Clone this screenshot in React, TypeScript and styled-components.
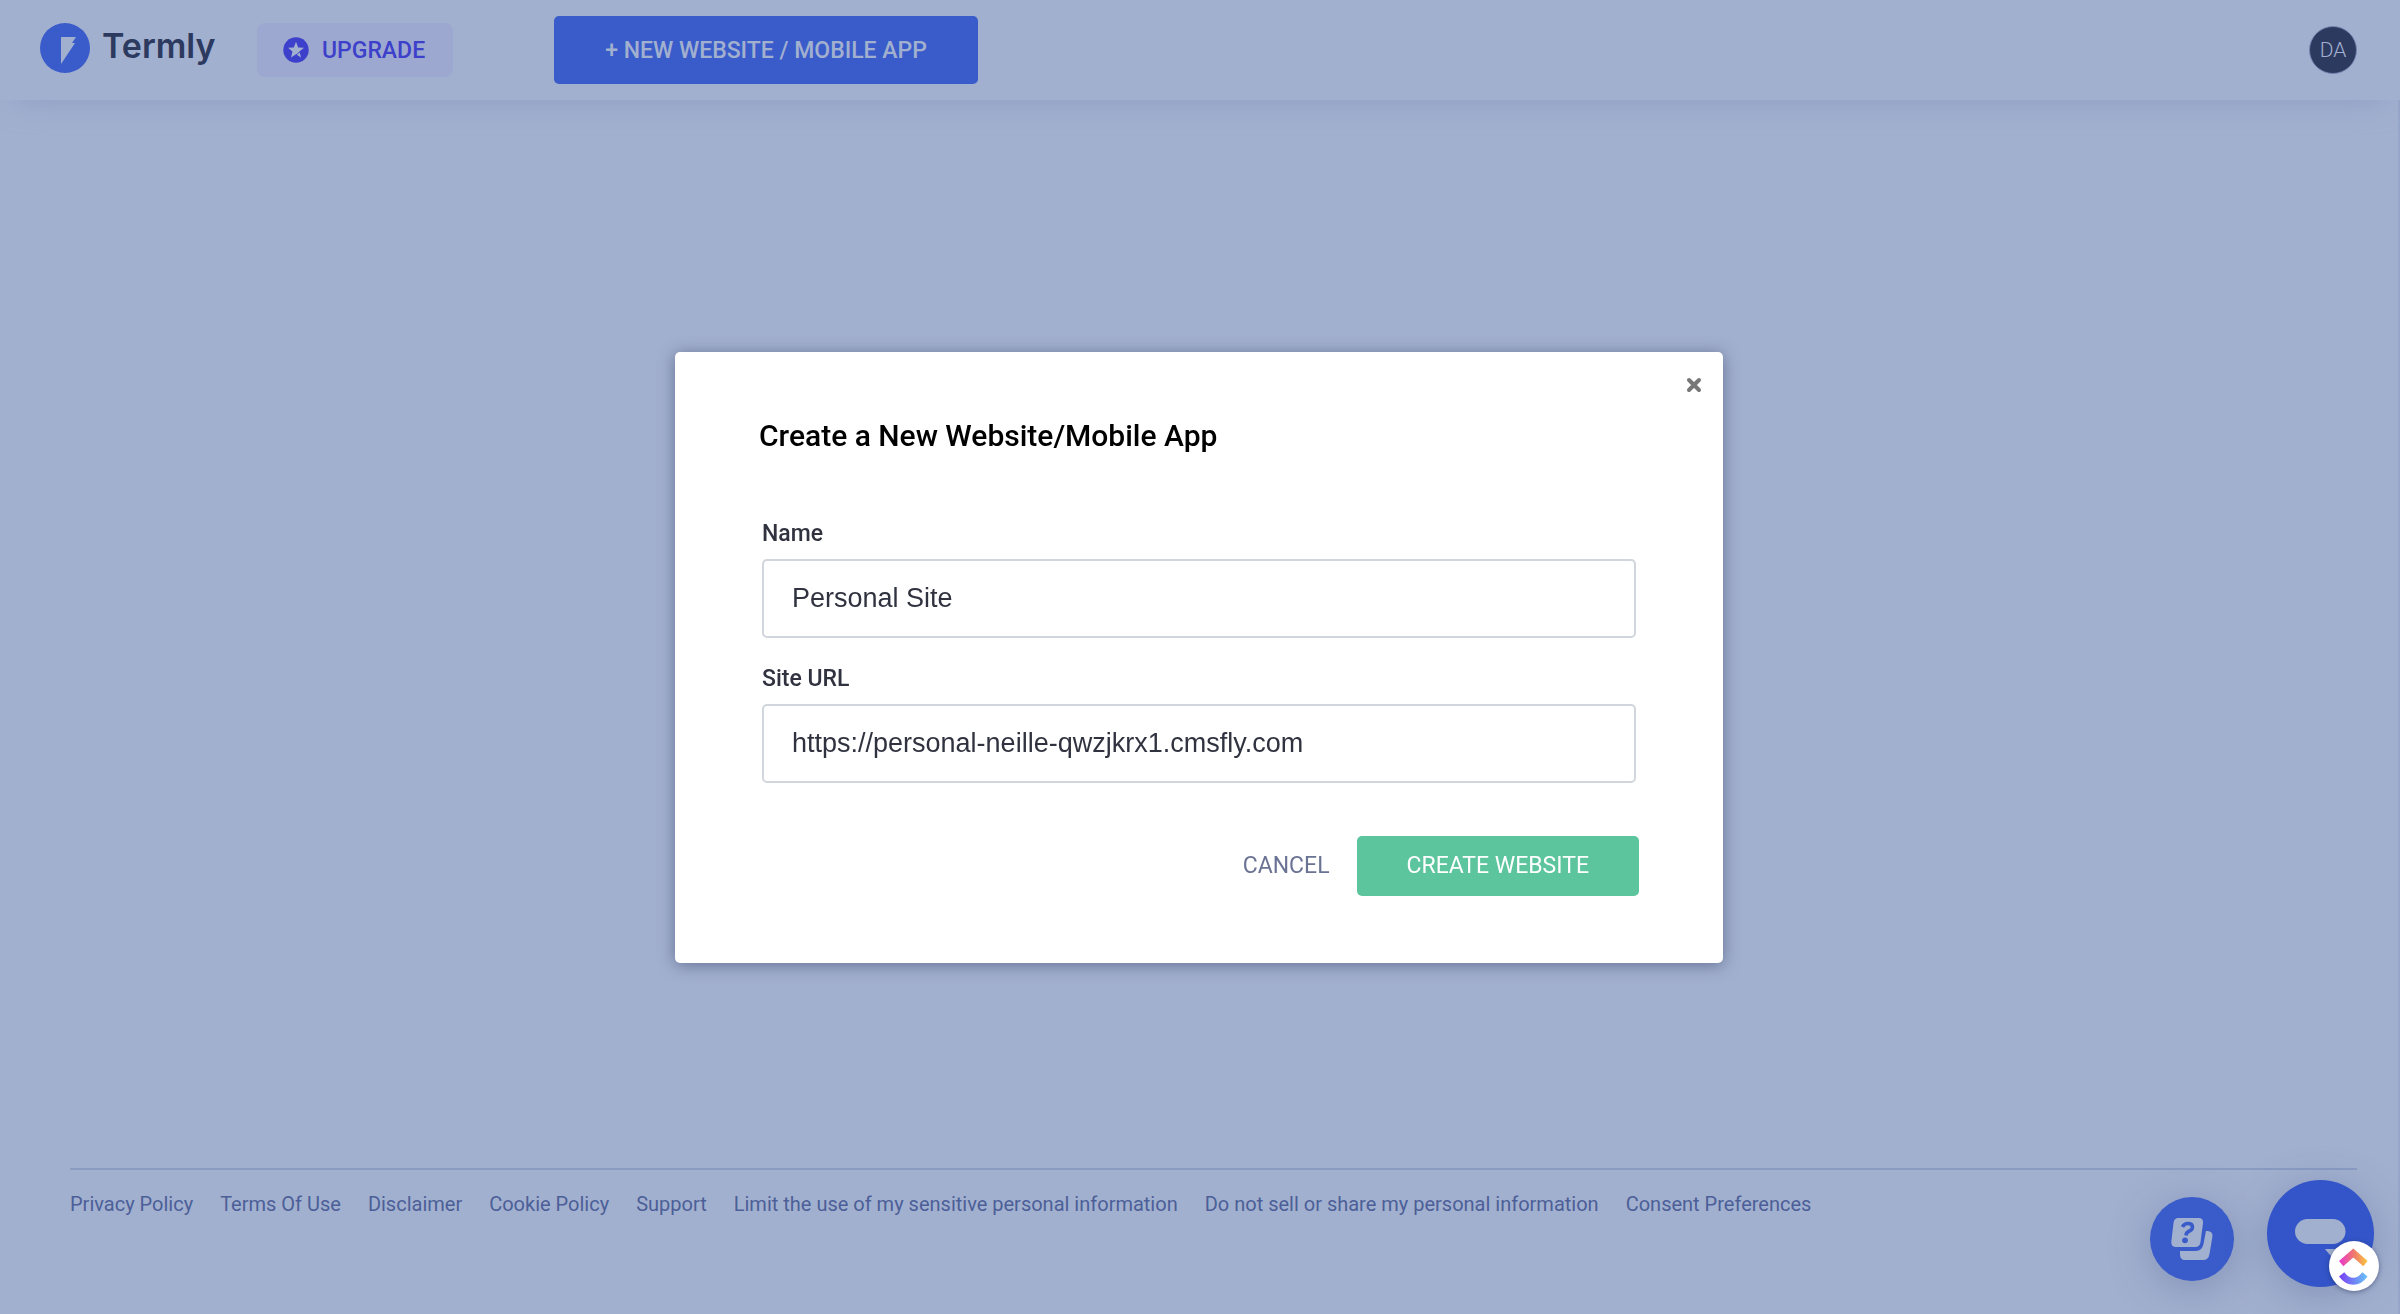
import React, { useState } from "react";
import styled, { createGlobalStyle } from "styled-components";

const color = {
  canvas: "#a2b0cf",
  edge: "#96a6ca",
  rule: "#8a9bc2",
  navy: "#2d3a60",
  blue: "#3a5cca",
  indigo: "#3d40ca",
  upgrade: "#9da8d0",
  link: "#4c5f98",
  ink: "#30333f",
  field: "#d1d6dc",
  muted: "#6b7394",
  green: "#5cc59d",
};

const GlobalStyle = createGlobalStyle`
  *, *::before, *::after { box-sizing: border-box; }
  body {
    margin: 0;
    background: ${color.canvas};
    font-family: Roboto, "Liberation Sans", sans-serif;
  }
  button, input { font-family: inherit; }
  button { border: 0; cursor: pointer; }
`;

const Page = styled.div`
  display: flex;
  flex-direction: column;
  min-height: 100vh;
`;

const Header = styled.header`
  position: relative;
  display: flex;
  align-items: center;
  height: 100px;
  padding: 0 43px 0 40px;
  background: ${color.canvas};
  box-shadow: 0 14px 32px -14px #8c9cc4;
`;

const Brand = styled.a`
  display: flex;
  align-items: center;
  gap: 12px;
  width: 217px;
  padding-bottom: 4px;
  color: ${color.navy};
  font-family: Inter, "Open Sans", sans-serif;
  font-size: 34px;
  font-weight: 600;
  line-height: 40px;
  text-decoration: none;
`;

const BrandName = styled.span`
  padding-bottom: 4px;
`;

const Upgrade = styled.button`
  display: flex;
  align-items: center;
  gap: 13px;
  height: 54px;
  padding: 0 28px 0 26px;
  border-radius: 8px;
  background: ${color.upgrade};
  color: ${color.indigo};
  font-size: 23px;
  font-weight: 500;
`;

const NewSite = styled.button`
  height: 68px;
  margin-left: 101px;
  padding: 0 51px;
  border-radius: 5px;
  background: ${color.blue};
  color: ${color.canvas};
  font-size: 23px;
  font-weight: 500;
`;

const Avatar = styled.button`
  width: 48px;
  height: 48px;
  margin-left: auto;
  padding: 0;
  border: 1px solid #7485b0;
  border-radius: 50%;
  background: ${color.navy};
  color: ${color.canvas};
  font-size: 21px;
  font-weight: 300;
`;

const Body = styled.div`
  display: flex;
  flex: 1;
  flex-direction: column;
  justify-content: flex-end;
  border-right: 2px solid ${color.edge};
`;

const Footer = styled.footer`
  display: flex;
  flex-wrap: wrap;
  gap: 27px;
  min-height: 146px;
  margin: 0 41px 0 70px;
  padding-top: 22px;
  border-top: 2px solid ${color.rule};
`;

const FooterLink = styled.a`
  color: ${color.link};
  font-size: 20px;
  line-height: 24px;
  text-decoration: none;
`;

const Overlay = styled.div`
  position: fixed;
  inset: 0 2px 0 0;
  display: flex;
  align-items: center;
  justify-content: center;
`;

const Dialog = styled.form`
  position: relative;
  width: 1048px;
  max-width: 96%;
  padding: 64px 84px 67px;
  border-radius: 5px;
  background: #fff;
  box-shadow: 0 2px 16px rgba(40, 50, 90, 0.5);
`;

const Close = styled.button`
  position: absolute;
  top: 20px;
  right: 16px;
  display: flex;
  padding: 5px;
  background: none;
`;

const Title = styled.h1`
  margin: 0;
  color: #000;
  font-size: 30px;
  font-weight: 500;
  line-height: 40px;
`;

const Fields = styled.div`
  display: grid;
  gap: 26px;
  margin: 63px 3px 53px;
`;

const Field = styled.div`
  display: flex;
  flex-direction: column;
  gap: 10px;
`;

const Label = styled.label`
  color: ${color.ink};
  font-size: 23px;
  font-weight: 500;
  line-height: 30px;
`;

const TextBox = styled.input`
  width: 100%;
  height: 79px;
  padding: 0 28px;
  border: 2px solid ${color.field};
  border-radius: 5px;
  outline: none;
  background: #fff;
  color: ${color.ink};
  font-family: "Liberation Sans", Arial, sans-serif;
  font-size: 27px;
`;

const Actions = styled.div`
  display: flex;
  justify-content: flex-end;
  gap: 27px;
`;

const Cancel = styled.button`
  padding: 0;
  background: none;
  color: ${color.muted};
  font-size: 23px;
`;

const Submit = styled.button`
  height: 60px;
  padding: 0 50px;
  border-radius: 5px;
  background: ${color.green};
  color: #fff;
  font-size: 23px;
`;

const Floating = styled.div`
  position: fixed;
  right: 26px;
  bottom: 27px;
  display: flex;
  align-items: center;
  gap: 33px;
`;

const Bubble = styled.button<{ $size: number; $fill: string }>`
  display: flex;
  align-items: center;
  justify-content: center;
  width: ${(p) => p.$size}px;
  height: ${(p) => p.$size}px;
  padding: 0;
  border-radius: 50%;
  background: ${(p) => p.$fill};
  box-shadow: 0 8px 40px rgba(70, 90, 140, 0.35);
`;

const HelpSlot = styled.div`
  padding-top: 10px;
`;

const ClickUp = styled.button`
  position: absolute;
  right: -5px;
  bottom: -4px;
  display: flex;
  padding: 0;
  border-radius: 50%;
  background: #fff;
  box-shadow: 0 1px 5px rgba(30, 40, 80, 0.5);
`;

const TermlyMark = () => (
  <svg width="50" height="50" viewBox="0 0 50 50" aria-hidden="true">
    <circle cx="25" cy="25" r="25" fill={color.blue} />
    <path d="M21 14H36L32 20H35L21 41Z" fill={color.canvas} />
  </svg>
);

const StarMark = () => (
  <svg width="26" height="26" viewBox="0 0 26 26" aria-hidden="true">
    <circle cx="13" cy="13" r="12.7" fill={color.indigo} />
    <path
      d="M13 4.8L15.2 10.4L21 10.8L16.5 14.6L18 20.4L13 17.2L8 20.4L9.5 14.6L5 10.8L10.8 10.4Z"
      fill={color.canvas}
    />
    <path d="M12.5 18.5L18 14" stroke={color.indigo} strokeWidth="1" />
  </svg>
);

const HelpIcon = () => (
  <svg width="84" height="84" viewBox="0 0 84 84" aria-hidden="true">
    <path
      d="M28.5 21H48.5Q53.5 21 53 26L50.5 45Q50 50 45 50H26Q21 50 21.3 45L23.5 26Q24 21 28.5 21Z"
      fill={color.canvas}
    />
    <path
      d="M56 34H57.5Q62.7 34.5 62.5 39L59.5 57Q58.5 63 53 63H35Q30 63 30 57V54H46Q52 54 53.5 47Z"
      fill={color.canvas}
    />
    <path
      d="M32.5 30Q34 26.500 38 26.5Q42.5 26.5 42.5 30Q42.5 33 38.5 34.5Q36.3 35.5 36 38.5"
      fill="none"
      stroke={color.blue}
      strokeWidth="3.6"
    />
    <circle cx="35" cy="43.3" r="2.9" fill={color.blue} />
  </svg>
);

const ChatIcon = () => (
  <svg width="107" height="107" viewBox="0 0 107 107" aria-hidden="true">
    <rect x="28" y="39" width="50.5" height="25" rx="12.5" fill={color.canvas} />
    <path d="M58 69H76V84Q66 80 58 69Z" fill={color.canvas} />
  </svg>
);

const ClickUpIcon = () => (
  <svg width="50" height="50" viewBox="0 0 50 50" aria-hidden="true">
    <defs>
      <linearGradient id="cu-top" x1="0" x2="1">
        <stop offset="0" stopColor="#e935d3" />
        <stop offset="0.5" stopColor="#ef7670" />
        <stop offset="1" stopColor="#f8c63c" />
      </linearGradient>
      <linearGradient id="cu-bottom" x1="0" x2="1">
        <stop offset="0" stopColor="#7b3df5" />
        <stop offset="1" stopColor="#68c4f6" />
      </linearGradient>
    </defs>
    <path d="M24.3 7.5L38.6 20L34.3 25.2L24.3 16.5L14.3 25.2L10 20Z" fill="url(#cu-top)" />
    <path
      d="M10 35.5L15.3 31.3Q19.5 36.8 24.3 36.8Q29.2 36.8 33.3 31.3L38.6 35.5Q32.5 43.8 24.3 43.8Q16.2 43.8 10 35.5Z"
      fill="url(#cu-bottom)"
    />
  </svg>
);

const CloseIcon = () => (
  <svg width="16" height="16" viewBox="0 0 16 16" aria-hidden="true">
    <path d="M3 3L13 13M13 3L3 13" stroke="#777" strokeWidth="4" strokeLinecap="round" />
  </svg>
);

const links = [
  "Privacy Policy",
  "Terms Of Use",
  "Disclaimer",
  "Cookie Policy",
  "Support",
  "Limit the use of my sensitive personal information",
  "Do not sell or share my personal information",
  "Consent Preferences",
];

export default function App() {
  const [name, setName] = useState("Personal Site");
  const [url, setUrl] = useState("https://personal-neille-qwzjkrx1.cmsfly.com");

  return (
    <>
      <GlobalStyle />
      <Page>
        <Header>
          <Brand href="#">
            <TermlyMark />
            <BrandName>Termly</BrandName>
          </Brand>
          <Upgrade type="button">
            <StarMark />
            UPGRADE
          </Upgrade>
          <NewSite type="button">+ NEW WEBSITE / MOBILE APP</NewSite>
          <Avatar type="button">DA</Avatar>
        </Header>
        <Body>
          <Footer>
            {links.map((text) => (
              <FooterLink key={text} href="#">
                {text}
              </FooterLink>
            ))}
          </Footer>
        </Body>
      </Page>
      <Overlay>
        <Dialog role="dialog" aria-labelledby="dialog-title" onSubmit={(e) => e.preventDefault()}>
          <Close type="button" aria-label="Close">
            <CloseIcon />
          </Close>
          <Title id="dialog-title">Create a New Website/Mobile App</Title>
          <Fields>
            <Field>
              <Label htmlFor="site-name">Name</Label>
              <TextBox id="site-name" value={name} onChange={(e) => setName(e.target.value)} />
            </Field>
            <Field>
              <Label htmlFor="site-url">Site URL</Label>
              <TextBox id="site-url" value={url} onChange={(e) => setUrl(e.target.value)} />
            </Field>
          </Fields>
          <Actions>
            <Cancel type="button">CANCEL</Cancel>
            <Submit type="submit">CREATE WEBSITE</Submit>
          </Actions>
        </Dialog>
      </Overlay>
      <Floating>
        <HelpSlot>
          <Bubble type="button" aria-label="Help" $size={84} $fill={color.blue}>
            <HelpIcon />
          </Bubble>
        </HelpSlot>
        <Bubble type="button" aria-label="Chat" $size={107} $fill="#3355c9">
          <ChatIcon />
        </Bubble>
        <ClickUp type="button" aria-label="ClickUp">
          <ClickUpIcon />
        </ClickUp>
      </Floating>
    </>
  );
}
